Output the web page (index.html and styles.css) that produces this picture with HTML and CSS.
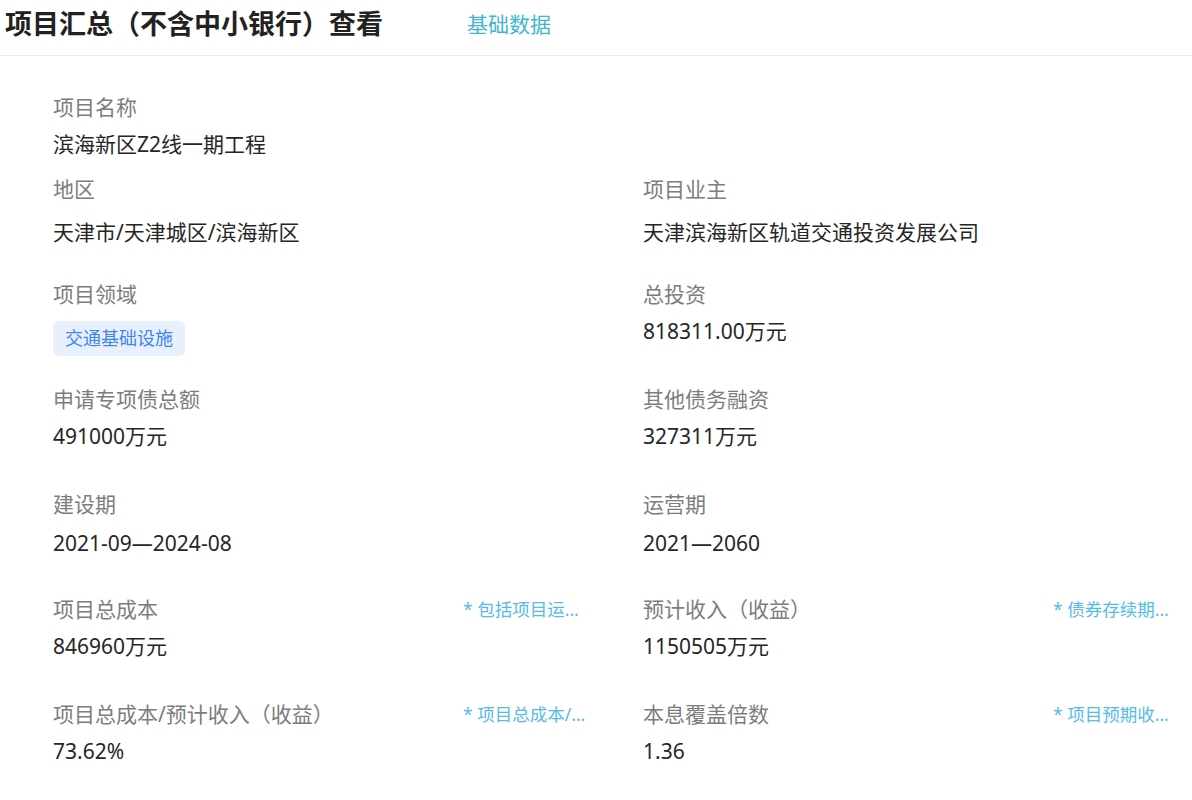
FILE: index.html
```html
<!DOCTYPE html>
<html lang="zh-CN">
<head>
  <meta charset="UTF-8">
  <meta name="viewport" content="width=device-width, initial-scale=1.0">
  <title>项目汇总（不含中小银行）查看</title>
  <link rel="stylesheet" href="styles.css">
</head>
<body>
  <div class="page-header">
    <h1 class="page-title">项目汇总（不含中小银行）查看</h1>
    <a class="tab-link" href="#">基础数据</a>
  </div>

  <div class="detail-grid">
    <!-- 项目名称 -->
    <div class="field field-full">
      <div class="field-label">项目名称</div>
      <div class="field-value">滨海新区Z2线一期工程</div>
    </div>

    <div class="field">
      <div class="field-label">地区</div>
      <div class="field-value field-value-loose">天津市/天津城区/滨海新区</div>
    </div>
    <div class="field">
      <div class="field-label">项目业主</div>
      <div class="field-value field-value-loose">天津滨海新区轨道交通投资发展公司</div>
    </div>

    <div class="field">
      <div class="field-label">项目领域</div>
      <div class="field-tags"><span class="tag">交通基础设施</span></div>
    </div>
    <div class="field">
      <div class="field-label">总投资</div>
      <div class="field-value">818311.00万元</div>
    </div>

    <div class="field">
      <div class="field-label">申请专项债总额</div>
      <div class="field-value">491000万元</div>
    </div>
    <div class="field">
      <div class="field-label">其他债务融资</div>
      <div class="field-value">327311万元</div>
    </div>

    <div class="field">
      <div class="field-label">建设期</div>
      <div class="field-value field-value-mid">2021-09—2024-08</div>
    </div>
    <div class="field">
      <div class="field-label">运营期</div>
      <div class="field-value field-value-mid">2021—2060</div>
    </div>

    <!-- 带提示的字段 -->
    <div class="field">
      <div class="label-row">
        <div class="field-label">项目总成本</div>
        <div class="field-hint">* 包括项目运...</div>
      </div>
      <div class="field-value">846960万元</div>
    </div>
    <div class="field">
      <div class="label-row">
        <div class="field-label">预计收入（收益）</div>
        <div class="field-hint">* 债券存续期...</div>
      </div>
      <div class="field-value">1150505万元</div>
    </div>

    <div class="field">
      <div class="label-row">
        <div class="field-label">项目总成本/预计收入（收益）</div>
        <div class="field-hint">* 项目总成本/...</div>
      </div>
      <div class="field-value">73.62%</div>
    </div>
    <div class="field">
      <div class="label-row">
        <div class="field-label">本息覆盖倍数</div>
        <div class="field-hint">* 项目预期收...</div>
      </div>
      <div class="field-value">1.36</div>
    </div>
  </div>
</body>
</html>
```

FILE: styles.css
```css
body {
  margin: 0;
  padding: 0;
  background-color: #ffffff;
  font-family: "Noto Sans", "Noto Sans CJK SC", sans-serif;
  color: #262626;
}

/* Header */
.page-header {
  display: flex;
  align-items: center;
  height: 46px;
  padding: 0 0 9px 5px;
  border-bottom: 1px solid #ebebeb;
}

.page-title {
  margin: 0 84px 0 0;
  font-size: 27px;
  font-weight: bold;
  color: #222222;
  line-height: 1;
}

.tab-link {
  font-size: 21px;
  color: #3fb6cb;
  text-decoration: none;
}

/* Detail grid */
.detail-grid {
  display: grid;
  grid-template-columns: 590px 590px;
  grid-template-rows: 82px repeat(6, 105px);
  padding: 36px 0 0 53px;
}

.field {
  display: flex;
  flex-direction: column;
  padding-right: 53px;
}

.field-full {
  grid-column: 1 / span 2;
}

.label-row {
  display: flex;
  align-items: center;
  justify-content: space-between;
}

.field-label {
  font-size: 21px;
  line-height: 30px;
  color: #7d7d7d;
}

.field-value {
  margin-top: 7px;
  font-size: 21px;
  line-height: 30px;
  color: #262626;
}

.field-value-loose {
  margin-top: 13px;
}

.field-value-mid {
  margin-top: 9px;
}

.field-hint {
  width: 127px;
  font-size: 17.5px;
  line-height: 30px;
  color: #56bbe6;
  white-space: nowrap;
  overflow: hidden;
}

.field-tags {
  margin-top: 12px;
}

.tag {
  display: inline-block;
  height: 35px;
  line-height: 35px;
  padding: 0 12px;
  font-size: 18px;
  color: #3d85ef;
  background-color: #e8f0fe;
  border-radius: 6px;
}
```
